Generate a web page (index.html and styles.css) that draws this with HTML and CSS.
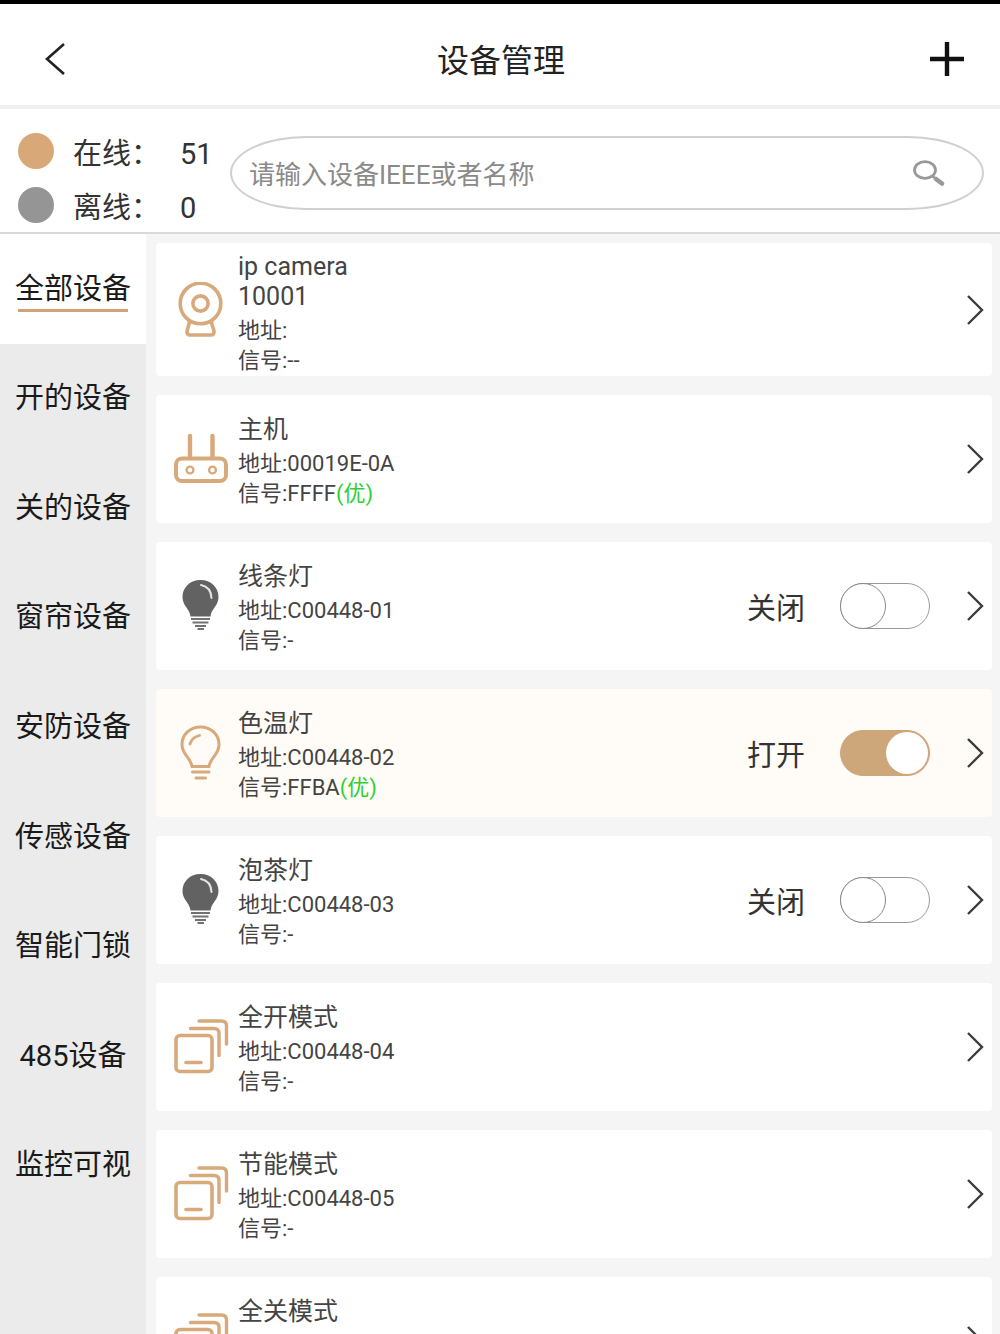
FILE: index.html
```html
<!DOCTYPE html>
<html lang="zh-CN">
<head>
    <meta charset="UTF-8">
    <meta name="viewport" content="width=device-width, initial-scale=1.0">
    <title>设备管理</title>
    <link rel="stylesheet" href="styles.css">
</head>
<body>
    <!-- 公用图标 -->
    <svg class="sprite" aria-hidden="true">
        <symbol id="arrow" viewBox="0 0 18 32">
            <path d="M2 2 L16 16 L2 30" fill="none" stroke="#3c3c3c" stroke-width="2.4"/>
        </symbol>
        <symbol id="camera" viewBox="0 0 56 56">
            <g fill="none" stroke="#d8a97a" stroke-width="3.6">
                <circle cx="27.500" cy="21.500" r="20.300"/>
                <circle cx="27.500" cy="21.500" r="7.600"/>
                <path d="M16.500 39 C16.500 44 14 46 14 50 Q14 53 17 53 H38 Q41 53 41 50 C41 46 38.500 44 38.500 39"/>
            </g>
        </symbol>
        <symbol id="router" viewBox="0 0 56 56">
            <g fill="none" stroke="#d8a97a">
                <rect x="3" y="27.500" width="50" height="22.500" rx="6" stroke-width="4"/>
                <path d="M17 27 V5 M39.500 27 V5" stroke-width="4.400" stroke-linecap="round"/>
                <circle cx="17" cy="39" r="3.400" stroke-width="2.400"/>
                <circle cx="39.500" cy="39" r="3.400" stroke-width="2.400"/>
            </g>
        </symbol>
        <symbol id="bulb-off" viewBox="0 0 56 56">
            <path d="M27.500 2 C17 2 9.500 9.500 9.500 19 C9.500 28 17 31 17.500 38.500 H37.500 C38 31 45.500 28 45.500 19 C45.500 9.500 38 2 27.500 2 Z" fill="#626262"/>
            <path d="M28 7 Q38 9 38.500 20" fill="none" stroke="#e4e4e4" stroke-width="2" stroke-linecap="round"/>
            <path d="M18 41 H37 M19.500 44.500 H35.500 M22 48 H33 M24.500 51 H31" stroke="#727272" stroke-width="1.800"/>
        </symbol>
        <symbol id="bulb-on" viewBox="0 0 56 56">
            <g fill="none" stroke="#d8a97a">
                <path d="M27.500 2 C16.500 2 9 10 9 19.500 C9 30 17.500 32 19 41.500 H36 C37.500 32 46 30 46 19.500 C46 10 38.500 2 27.500 2 Z" stroke-width="3"/>
                <path d="M17 19 Q19 12 26.500 10.500" stroke-width="2.800" stroke-linecap="round"/>
                <path d="M19.500 47 H36 M23 53 H32.500" stroke-width="3" stroke-linecap="round"/>
            </g>
        </symbol>
        <symbol id="scene" viewBox="0 0 56 56">
            <g fill="none" stroke="#d8a97a" stroke-width="3.600" stroke-linecap="round">
                <rect x="3" y="16.500" width="36" height="36" rx="4"/>
                <path d="M13 43.500 H28"/>
                <path d="M17.500 9.500 H41 Q46 9.500 46 14.500 V36.500" stroke-width="3.400"/>
                <path d="M26 2 H48.500 Q53.500 2 53.500 7 V25" stroke-width="3.400"/>
            </g>
        </symbol>
    </svg>

    <div class="app">
        <header class="header">
            <button class="icon-btn" type="button" aria-label="返回">
                <svg width="22" height="34" viewBox="0 0 22 34"><path d="M20 2 L3 17 L20 32" fill="none" stroke="#222" stroke-width="2.600"/></svg>
            </button>
            <h1>设备管理</h1>
            <button class="icon-btn" type="button" aria-label="添加">
                <svg width="34" height="34" viewBox="0 0 34 34"><path d="M0 17 H34 M17 0 V34" stroke="#111" stroke-width="4.400"/></svg>
            </button>
        </header>

        <section class="summary">
            <dl class="stats">
                <div class="stat online"><dt>在线：</dt><dd>51</dd></div>
                <div class="stat offline"><dt>离线：</dt><dd>0</dd></div>
            </dl>
            <form class="search">
                <input type="text" placeholder="请输入设备IEEE或者名称" aria-label="搜索设备">
                <button type="submit" aria-label="搜索">
                    <svg width="34" height="28" viewBox="0 0 34 28">
                        <ellipse cx="13" cy="11" rx="10.500" ry="8.300" fill="none" stroke="#999" stroke-width="2.800"/>
                        <path d="M20 17 L24 20" stroke="#999" stroke-width="2.400"/>
                        <path d="M24 20 L30 24.500" stroke="#999" stroke-width="4.600" stroke-linecap="round"/>
                    </svg>
                </button>
            </form>
        </section>

        <div class="content">
            <nav class="menu">
                <a class="active" href="#all"><span>全部设备</span></a>
                <a href="#on"><span>开的设备</span></a>
                <a href="#off"><span>关的设备</span></a>
                <a href="#curtain"><span>窗帘设备</span></a>
                <a href="#security"><span>安防设备</span></a>
                <a href="#sensor"><span>传感设备</span></a>
                <a href="#lock"><span>智能门锁</span></a>
                <a href="#485"><span>485设备</span></a>
                <a href="#monitor"><span>监控可视</span></a>
            </nav>

            <main class="devices">
                <article class="card tall">
                    <svg class="icon"><use href="#camera"/></svg>
                    <div class="info">
                        <h2>ip camera<br>10001</h2>
                        <p>地址:</p>
                        <p>信号:--</p>
                    </div>
                    <a class="more" href="#camera-10001" aria-label="详情"><svg><use href="#arrow"/></svg></a>
                </article>

                <article class="card">
                    <svg class="icon"><use href="#router"/></svg>
                    <div class="info">
                        <h2>主机</h2>
                        <p>地址:00019E-0A</p>
                        <p>信号:FFFF<span class="good">(优)</span></p>
                    </div>
                    <a class="more" href="#00019E-0A" aria-label="详情"><svg><use href="#arrow"/></svg></a>
                </article>

                <article class="card">
                    <svg class="icon"><use href="#bulb-off"/></svg>
                    <div class="info">
                        <h2>线条灯</h2>
                        <p>地址:C00448-01</p>
                        <p>信号:-</p>
                    </div>
                    <label class="switch"><span>关闭</span><input type="checkbox"></label>
                    <a class="more" href="#C00448-01" aria-label="详情"><svg><use href="#arrow"/></svg></a>
                </article>

                <article class="card on">
                    <svg class="icon"><use href="#bulb-on"/></svg>
                    <div class="info">
                        <h2>色温灯</h2>
                        <p>地址:C00448-02</p>
                        <p>信号:FFBA<span class="good">(优)</span></p>
                    </div>
                    <label class="switch"><span>打开</span><input type="checkbox" checked></label>
                    <a class="more" href="#C00448-02" aria-label="详情"><svg><use href="#arrow"/></svg></a>
                </article>

                <article class="card">
                    <svg class="icon"><use href="#bulb-off"/></svg>
                    <div class="info">
                        <h2>泡茶灯</h2>
                        <p>地址:C00448-03</p>
                        <p>信号:-</p>
                    </div>
                    <label class="switch"><span>关闭</span><input type="checkbox"></label>
                    <a class="more" href="#C00448-03" aria-label="详情"><svg><use href="#arrow"/></svg></a>
                </article>

                <article class="card">
                    <svg class="icon"><use href="#scene"/></svg>
                    <div class="info">
                        <h2>全开模式</h2>
                        <p>地址:C00448-04</p>
                        <p>信号:-</p>
                    </div>
                    <a class="more" href="#C00448-04" aria-label="详情"><svg><use href="#arrow"/></svg></a>
                </article>

                <article class="card">
                    <svg class="icon"><use href="#scene"/></svg>
                    <div class="info">
                        <h2>节能模式</h2>
                        <p>地址:C00448-05</p>
                        <p>信号:-</p>
                    </div>
                    <a class="more" href="#C00448-05" aria-label="详情"><svg><use href="#arrow"/></svg></a>
                </article>

                <article class="card">
                    <svg class="icon"><use href="#scene"/></svg>
                    <div class="info">
                        <h2>全关模式</h2>
                        <p>地址:C00448-06</p>
                        <p>信号:-</p>
                    </div>
                    <a class="more" href="#C00448-06" aria-label="详情"><svg><use href="#arrow"/></svg></a>
                </article>
            </main>
        </div>
    </div>
</body>
</html>
```
FILE: styles.css
```css
*, *:before, *:after {
    margin: 0;
    padding: 0;
    box-sizing: border-box;
}
body {
    font-family: Roboto, "Noto Sans CJK SC", sans-serif;
    color: #333;
    background: #fff;
}
button {
    border: 0;
    background: none;
    cursor: pointer;
}
svg {
    display: block;
}
a {
    color: inherit;
    text-decoration: none;
}
.sprite {
    display: none;
}
.app {
    display: flex;
    flex-direction: column;
    height: 100vh;
    border-top: 4px solid #000;
}

/* 顶部标题栏 */
.header {
    display: flex;
    align-items: center;
    justify-content: space-between;
    height: 105px;
    flex-shrink: 0;
    padding: 8px 36px 0 38px;
    border-bottom: 4px solid #f0f0f0;
}
.header h1 {
    font-size: 32px;
    font-weight: 400;
    line-height: 48px;
    padding-top: 4px;
    color: #222;
}
.icon-btn {
    display: flex;
    align-items: center;
    justify-content: center;
    min-width: 34px;
    height: 48px;
}

/* 在线统计和搜索 */
.summary {
    display: flex;
    align-items: center;
    flex-shrink: 0;
    height: 125px;
    padding: 4px 16px 0 18px;
    border-bottom: 2px solid #d9d9d9;
}
.stats {
    width: 212px;
    flex-shrink: 0;
    padding-top: 16px;
    font-size: 29px;
}
.stat {
    display: flex;
    align-items: center;
    line-height: 54px;
}
.stat:before {
    content: '';
    width: 36px;
    height: 36px;
    margin-right: 19px;
    margin-bottom: 6px;
    border-radius: 50%;
    background: #959595;
}
.online:before {
    background: #d8a878;
}
.stat dt {
    width: 107px;
}
.search {
    display: flex;
    align-items: center;
    flex: 1;
    height: 74px;
    padding: 0 36px 0 17px;
    border: 2px solid #d0d0d0;
    border-radius: 76px / 37px;
}
.search input {
    flex: 1;
    min-width: 0;
    padding-top: 4px;
    border: 0;
    outline: 0;
    background: none;
    font: inherit;
    font-size: 26px;
    line-height: 40px;
    color: #333;
}
.search input::placeholder {
    color: #8a8a8a;
}

/* 左侧分类 */
.content {
    display: flex;
    flex: 1;
    min-height: 0;
}
.menu {
    width: 146px;
    flex-shrink: 0;
    background: #ebebeb;
    overflow: hidden;
    display: grid;
    grid-template-rows: repeat(9, 1fr) 114px;
}
.menu a {
    display: flex;
    align-items: center;
    justify-content: center;
    font-size: 29px;
    line-height: 46px;
    color: #1a1a1a;
}
.menu .active {
    background: #fff;
}
.menu .active span {
    background: linear-gradient(#d0a478, #d0a478) center bottom / 110px 3px no-repeat;
}

/* 设备列表 */
.devices {
    flex: 1;
    min-width: 0;
    display: flex;
    flex-direction: column;
    gap: 19px;
    padding: 9px 8px 19px 10px;
    background: #f5f5f5;
    overflow-y: auto;
    scrollbar-width: none;
}
.card {
    display: flex;
    align-items: center;
    flex-shrink: 0;
    min-height: 128px;
    padding: 0 8px 0 17px;
    border-radius: 4px;
    background: #fff;
}
.card.on {
    background: #fffbf6;
}
.icon {
    width: 56px;
    height: 56px;
    margin-right: 9px;
}
.info {
    flex: 1;
    padding: 20px 0 14px;
    color: #444;
}
.info h2 {
    font-size: 25px;
    font-weight: 400;
    line-height: 30px;
    margin-bottom: 4px;
}
.info p {
    font-size: 22px;
    line-height: 30px;
}
.tall .info {
    padding: 9px 0 0;
}
.good {
    color: #2fd02f;
}
.switch {
    display: flex;
    align-items: center;
    gap: 35px;
    margin-right: 36px;
    font-size: 29px;
    line-height: 44px;
}
.switch span {
    padding-top: 6px;
}
.switch input {
    appearance: none;
    width: 90px;
    height: 46px;
    border: 1px solid #999;
    border-radius: 23px;
    background: #fff;
    cursor: pointer;
}
.switch input:before {
    content: '';
    display: block;
    width: 46px;
    height: 46px;
    margin: -1px;
    border: 1px solid #888;
    border-radius: 50%;
    background: #fff;
}
.switch input:checked {
    border-color: #cda67a;
    background: #cda67a;
}
.switch input:checked:before {
    width: 42px;
    height: 42px;
    margin: 1px 1px 1px auto;
    border: 0;
}
.more svg {
    width: 18px;
    height: 32px;
}
```
